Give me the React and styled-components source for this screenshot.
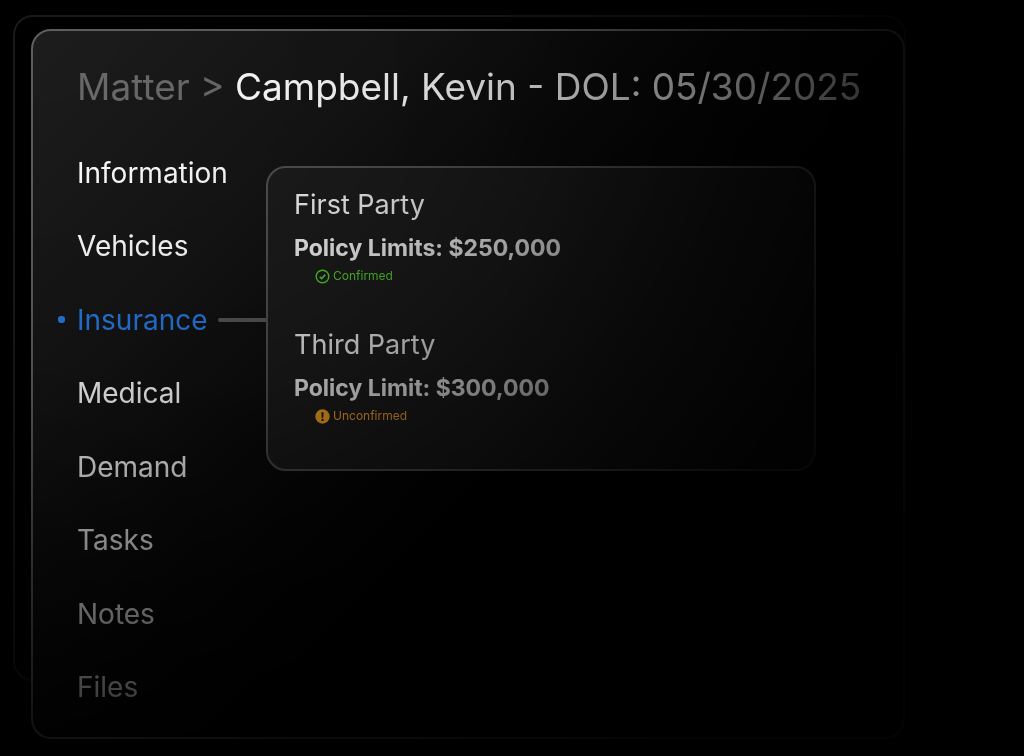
import React, { useState } from 'react';
import styled, { createGlobalStyle } from 'styled-components';

const GlobalStyle = createGlobalStyle`
  *, *::before, *::after { box-sizing:border-box; }
  body { margin:0; background:#000; color:#fff; font-family:Inter, 'Liberation Sans', sans-serif; }
  h1, h2, p { margin:0; font-weight:400; }
  a { color:inherit; text-decoration:none; }
`;

// everything fades to black away from the top left corner
const Scene = styled.div`
  position:relative; min-height:100vh; display:flex; padding:29px 119px 17px 31px;
  mask-image: radial-gradient(87% 98% at 32px 30px,
    #000 0%, rgba(0,0,0,.96) 22%, rgba(0,0,0,.9) 38%, rgba(0,0,0,.81) 49%, rgba(0,0,0,.67) 60%,
    rgba(0,0,0,.52) 70%, rgba(0,0,0,.38) 80%, rgba(0,0,0,.25) 90%, rgba(0,0,0,.12) 100%, rgba(0,0,0,.04) 120%);
`;
const BackCard = styled.div`
  position:absolute; inset:15px 118px 75px 13px;
  border:2px solid #1a1a1a; border-radius:20px;
`;
const Card = styled.main`
  position:relative; flex:1; min-width:0; display:flex; flex-direction:column; gap:44px;
  padding:32px 0 32px 44px; border:2px solid #5e5e5e; border-radius:20px;
  background:linear-gradient(135deg, #1d1d1d 0%, #141414 25%, #080808 45%, #000 60%);
`;
const Title = styled.h1`
  font-size:37px; line-height:48px; white-space:nowrap;
`;
const Crumb = styled.a` color:#6a6a6a; `;
const Body = styled.div` flex:1; display:flex; align-items:stretch; `;
const Nav = styled.nav`
  width:189px; display:flex; flex-direction:column; justify-content:space-between;
`;
const Item = styled.a`
  position:relative; display:flex; align-items:center; gap:10px;
  font-size:28px; line-height:36px; color:${p=>p.$active ? '#2678e0' : '#fff'};
`;
const Dot = styled.span`
  position:absolute; right:100%; margin-right:12px;
  width:7px; height:7px; border-radius:3px; background:#2678e0;
`;
const Connector = styled.span`
  flex:1; height:4px; border-radius:2px 0 0 2px; background:#555;
`;
const Panel = styled.section`
  flex:1; align-self:flex-start; display:flex; flex-direction:column; gap:41px;
  margin:11px 87px 0 0; padding:19px 26px 43px; border:2px solid #505050; border-radius:20px;
  background:linear-gradient(110deg, #1b1b1b 0%, #1b1b1b 45%, #101010 100%);
`;
const Party = styled.div` display:flex; flex-direction:column; `;
const PartyName = styled.h2` font-size:27px; line-height:36px; color:#eee; `;
const Limit = styled.p` margin-top:9px; font-size:23px; line-height:32px; font-weight:700; color:#eee; `;
const Status = styled.p`
  display:flex; align-items:center; gap:3px; margin-top:2px; padding-left:21px;
  font-size:12px; line-height:20px; color:${p=>p.$ok ? '#52c92a' : '#f5a524'};
`;

const ConfirmedIcon = () => (
  <svg width="15" height="15" viewBox="0 0 15 15" fill="none" stroke="currentColor" aria-hidden="true">
    <circle cx="7.5" cy="7.5" r="6.3" strokeWidth="1.4"/>
    <path d="M4.8 7.8 6.7 9.6 10.2 5.6" strokeWidth="1.6"/>
  </svg>
);
const UnconfirmedIcon = () => (
  <svg width="15" height="15" viewBox="0 0 15 15" aria-hidden="true">
    <circle cx="7.5" cy="7.5" r="7.2" fill="currentColor"/>
    <path d="M6.4 3.2h2.2l-.3 5.6H6.7z" fill="#1a1a1a"/>
    <circle cx="7.5" cy="10.9" r="1.2" fill="#1a1a1a"/>
  </svg>
);

const sections = ['Information', 'Vehicles', 'Insurance', 'Medical', 'Demand', 'Tasks', 'Notes', 'Files'];

const parties = [
  { name:'First Party', limit:'Policy Limits: $250,000', ok:true },
  { name:'Third Party', limit:'Policy Limit: $300,000', ok:false },
];

export default function App(){
  const [active, setActive] = useState('Insurance');
  return (
    <>
      <GlobalStyle />
      <Scene>
        <BackCard />
        <Card>
          <Title><Crumb href="#matter">Matter &gt;</Crumb> Campbell, Kevin - DOL: 05/30/2025</Title>
          <Body>
            <Nav>
              {sections.map(s => (
                <Item key={s} href={`#${s.toLowerCase()}`} $active={s === active} onClick={()=>setActive(s)}>
                  {s === active && <Dot />}
                  {s}
                  {s === active && <Connector />}
                </Item>
              ))}
            </Nav>
            <Panel>
              {parties.map(p => (
                <Party key={p.name}>
                  <PartyName>{p.name}</PartyName>
                  <Limit>{p.limit}</Limit>
                  <Status $ok={p.ok}>
                    {p.ok ? <ConfirmedIcon/> : <UnconfirmedIcon/>}
                    {p.ok ? 'Confirmed' : 'Unconfirmed'}
                  </Status>
                </Party>
              ))}
            </Panel>
          </Body>
        </Card>
      </Scene>
    </>
  );
}
